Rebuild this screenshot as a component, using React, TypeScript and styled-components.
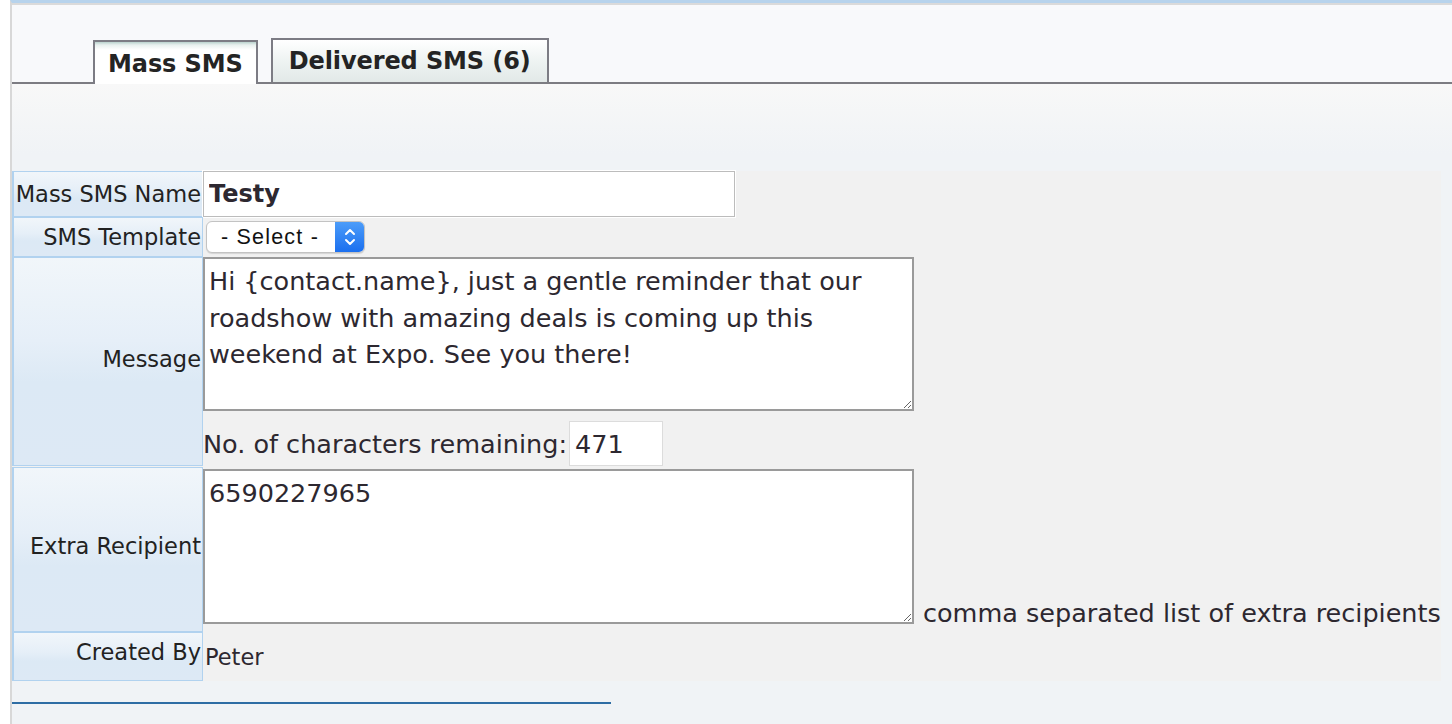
import React from "react";
import styled, { createGlobalStyle } from "styled-components";

const GlobalStyle = createGlobalStyle`
  html, body { margin: 0; padding: 0; background: #ffffff; }
  body { font-family: "DejaVu Sans", Verdana, sans-serif; color: #2d2830; }
  * { box-sizing: border-box; }
`;

const Page = styled.div`
  padding-left: 10px;
  background: #ffffff;
  min-height: 724px;
`;

const Panel = styled.div`
  border-left: 2px solid #d8d8d8;
  border-top: 3px solid #b7d3ec;
  background: #f0f3f6;
  min-height: 724px;
`;

const TopShade = styled.div`
  height: 2px;
  background: #dadada;
`;

const TabBar = styled.div`
  height: 79px;
  display: flex;
  align-items: flex-end;
  gap: 13px;
  padding-left: 81px;
  background: #f8f9fb;
  border-bottom: 2px solid #7c7c82;
`;

const Tab = styled.div<{ $active?: boolean }>`
  height: 44px;
  display: flex;
  align-items: center;
  padding: ${(p) => (p.$active ? "2px 13px 0 13px" : "0 16px")};
  border: 2px solid #7c7c84;
  border-bottom: none;
  margin-bottom: ${(p) => (p.$active ? "-2px" : "0")};
  background: ${(p) =>
    p.$active
      ? "linear-gradient(#b9d2cd 0px, #e8f0ee 3px, #ffffff 8px, #ffffff 100%)"
      : "linear-gradient(#ffffff 0%, #eef3f2 50%, #e2e9e8 100%)"};
  font-family: "DejaVu Sans", Verdana, sans-serif;
  font-weight: bold;
  font-size: 24px;
  color: #242424;
  letter-spacing: -0.1px;
  cursor: default;
  position: relative;
  z-index: ${(p) => (p.$active ? 1 : 0)};
`;

const Content = styled.div`
  padding-top: 87px;
  background: linear-gradient(#f8f8f8 0px, #f0f3f6 70px, #f0f3f6 100%);
  padding-bottom: 20px;
`;

const Form = styled.div`
  margin-right: 11px;
  background: #f1f1f1;
  display: flex;
  flex-direction: column;
`;

const Row = styled.div<{ $h: number; $gapTop?: number }>`
  display: flex;
  min-height: ${(p) => p.$h}px;
  margin-top: ${(p) => p.$gapTop ?? 0}px;
`;

const Label = styled.div<{ $align?: string; $padTop?: number; $padBottom?: number }>`
  width: 191px;
  flex: none;
  display: flex;
  justify-content: flex-end;
  align-items: ${(p) => p.$align ?? "center"};
  padding-top: ${(p) => p.$padTop ?? 0}px;
  padding-bottom: ${(p) => p.$padBottom ?? 0}px;
  padding-right: 1px;
  border: 1px solid #b1d2ef;
  border-left-width: 2px;
  background: linear-gradient(#f1f6fa 0%, #e6eff8 40%, #dce9f5 60%, #dde9f5 100%);
  font-size: 22.5px;
  color: #222222;
  white-space: nowrap;
`;

const Field = styled.div<{ $align?: string; $dir?: string }>`
  flex: 1;
  display: flex;
  flex-direction: ${(p) => p.$dir ?? "row"};
  align-items: ${(p) => p.$align ?? "center"};
`;

const TextInput = styled.input`
  width: 532px;
  height: 46px;
  border: 1px solid #bcbcbc;
  outline: 1px solid #ffffff;
  background: #ffffff;
  padding: 0 5px;
  font-family: "DejaVu Sans", Verdana, sans-serif;
  font-weight: bold;
  font-size: 24px;
  color: #2d2830;
`;

const SelectWrap = styled.div`
  margin-left: 3px;
  width: 159px;
  height: 32px;
  display: flex;
  border-radius: 6px;
  border: 1px solid #c3c3c3;
  box-shadow: 0 1px 1px rgba(0, 0, 0, 0.12);
  background: #ffffff;
  overflow: hidden;
`;

const NativeSelect = styled.select`
  appearance: none;
  -webkit-appearance: none;
  flex: 1;
  min-width: 0;
  border: none;
  background: transparent;
  padding: 0 0 0 14px;
  font-family: "Liberation Sans", Arial, sans-serif;
  font-size: 21.5px;
  letter-spacing: 1.2px;
  color: #111111;
  outline: none;
`;

const Stepper = styled.span`
  width: 29px;
  flex: none;
  display: flex;
  align-items: center;
  justify-content: center;
  background: linear-gradient(#4c9cf9, #1b6fef);
`;

const TextArea = styled.textarea<{ $h: number }>`
  width: 711px;
  height: ${(p) => p.$h}px;
  border: 2px solid #9a9a9a;
  background: #ffffff;
  padding: 4px 4px;
  font-family: "DejaVu Sans", Verdana, sans-serif;
  font-size: 25.5px;
  line-height: 36.5px;
  color: #2d2830;
  resize: both;
  outline: none;
  flex: none;
`;

const CounterRow = styled.div`
  display: flex;
  align-items: center;
  margin-top: 10px;
  font-size: 25.5px;
  color: #2d2830;
`;

const CounterInput = styled.input`
  width: 94px;
  height: 45px;
  margin-left: 2px;
  border: 1px solid #dcdcdc;
  background: #ffffff;
  padding: 0 5px;
  font-family: "DejaVu Sans", Verdana, sans-serif;
  font-size: 25.5px;
  color: #2d2830;
`;

const Hint = styled.span`
  margin-left: 9px;
  margin-bottom: 4px;
  font-size: 25.5px;
  line-height: 30px;
  white-space: nowrap;
  color: #2d2830;
`;

const PlainValue = styled.span`
  margin-left: 2px;
  font-size: 22.5px;
  color: #2d2830;
`;

const FooterRule = styled.div`
  margin-top: 21px;
  width: 599px;
  height: 2px;
  background: #2e6da4;
`;

const StepperIcon = () => (
  <svg width="14" height="22" viewBox="0 0 14 22" fill="none">
    <path d="M3 8 L7 4 L11 8" stroke="#ffffff" strokeWidth="2" strokeLinecap="round" strokeLinejoin="round" />
    <path d="M3 14 L7 18 L11 14" stroke="#ffffff" strokeWidth="2" strokeLinecap="round" strokeLinejoin="round" />
  </svg>
);

export default function App() {
  return (
    <>
      <GlobalStyle />
      <Page>
        <Panel>
          <TopShade />
          <TabBar>
            <Tab $active>Mass SMS</Tab>
            <Tab>Delivered SMS (6)</Tab>
          </TabBar>
          <Content>
            <Form>
              <Row $h={46}>
                <Label>Mass SMS Name</Label>
                <Field>
                  <TextInput defaultValue="Testy" />
                </Field>
              </Row>
              <Row $h={40}>
                <Label>SMS Template</Label>
                <Field>
                  <SelectWrap>
                    <NativeSelect defaultValue="">
                      <option value="">- Select -</option>
                    </NativeSelect>
                    <Stepper>
                      <StepperIcon />
                    </Stepper>
                  </SelectWrap>
                </Field>
              </Row>
              <Row $h={208}>
                <Label $padBottom={6}>Message</Label>
                <Field $dir="column" $align="flex-start">
                  <TextArea
                    $h={154}
                    defaultValue="Hi {contact.name}, just a gentle reminder that our roadshow with amazing deals is coming up this weekend at Expo. See you there!"
                  />
                  <CounterRow>
                    No. of characters remaining:
                    <CounterInput defaultValue="471" />
                  </CounterRow>
                </Field>
              </Row>
              <Row $h={165} $gapTop={1}>
                <Label $padBottom={8}>Extra Recipient</Label>
                <Field $align="flex-end">
                  <TextArea $h={155} defaultValue="6590227965" style={{ marginBottom: 8 }} />
                  <Hint>comma separated list of extra recipients</Hint>
                </Field>
              </Row>
              <Row $h={49}>
                <Label $align="flex-start" $padTop={6}>Created By</Label>
                <Field>
                  <PlainValue>Peter</PlainValue>
                </Field>
              </Row>
            </Form>
            <FooterRule />
          </Content>
        </Panel>
      </Page>
    </>
  );
}
